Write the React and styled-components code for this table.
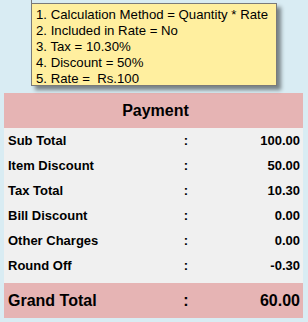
import React from "react";
import styled, { createGlobalStyle } from "styled-components";

const Global = createGlobalStyle`
  html, body { margin: 0; padding: 0; }
  body {
    background: #d9ecf3;
    font-family: "Liberation Sans", Arial, sans-serif;
    width: 308px;
    height: 322px;
    overflow: hidden;
  }
`;

const Page = styled.div`
  position: relative;
  width: 308px;
  height: 322px;
  padding: 93px 5px 0 4px;
  box-sizing: border-box;
`;

const Tooltip = styled.div`
  position: absolute;
  left: 31px;
  top: 3px;
  width: 246px;
  height: 83px;
  box-sizing: border-box;
  background: #ffef9f;
  border: 1px solid #7a7a7a;
  box-shadow: 4px 4px 4px rgba(0, 0, 0, 0.45);
  padding: 3px 0 0 4px;
  z-index: 2;
  &::before {
    content: "";
    position: absolute;
    left: -1px;
    top: -4px;
    width: 1px;
    height: 4px;
    background: #7a7a7a;
  }
`;

const TipLine = styled.div`
  font-size: 13.2px;
  line-height: 16px;
  color: #000;
  white-space: pre;
`;

const Panel = styled.div`
  width: 299px;
  background: #f0f0f0;
  display: flex;
  flex-direction: column;
`;

const Header = styled.div`
  height: 35px;
  background: #e6b4b4;
  display: flex;
  align-items: center;
  justify-content: center;
  font-weight: bold;
  font-size: 16px;
  color: #000;
  padding-left: 4px;
`;

const Rows = styled.div`
  display: flex;
  flex-direction: column;
  padding-bottom: 5px;
`;

const Row = styled.div`
  display: grid;
  grid-template-columns: 172px 12px 1fr;
  align-items: center;
  height: ${(p) => (p.$big ? "35px" : "25px")};
  padding: 0 3px 0 4px;
  font-weight: bold;
  font-size: ${(p) => (p.$big ? "16px" : "13px")};
  color: #000;
  background: ${(p) => (p.$big ? "#e6b4b4" : "transparent")};
`;

const Label = styled.span`
  white-space: nowrap;
`;

const Colon = styled.span`
  text-align: center;
`;

const Value = styled.span`
  text-align: right;
`;

const tips = [
  "1. Calculation Method = Quantity * Rate",
  "2. Included in Rate = No",
  "3. Tax = 10.30%",
  "4. Discount = 50%",
  "5. Rate =  Rs.100",
];

const rows = [
  ["Sub Total", "100.00"],
  ["Item Discount", "50.00"],
  ["Tax Total", "10.30"],
  ["Bill Discount", "0.00"],
  ["Other Charges", "0.00"],
  ["Round Off", "-0.30"],
];

export default function App() {
  return (
    <>
      <Global />
      <Page>
        <Tooltip>
          {tips.map((t) => (
            <TipLine key={t}>{t}</TipLine>
          ))}
        </Tooltip>
        <Panel>
          <Header>Payment</Header>
          <Rows>
            {rows.map(([l, v]) => (
              <Row key={l}>
                <Label>{l}</Label>
                <Colon>:</Colon>
                <Value>{v}</Value>
              </Row>
            ))}
          </Rows>
          <Row $big>
            <Label>Grand Total</Label>
            <Colon>:</Colon>
            <Value>60.00</Value>
          </Row>
        </Panel>
      </Page>
    </>
  );
}
